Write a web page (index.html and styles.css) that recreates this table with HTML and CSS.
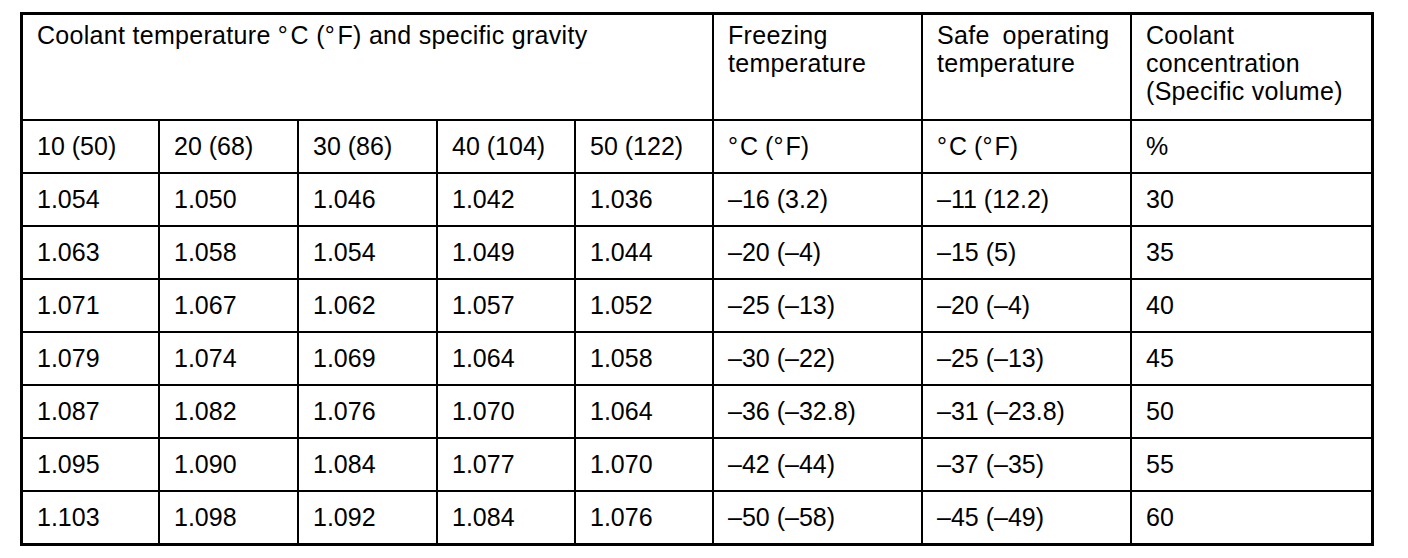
FILE: index.html
```html
<!DOCTYPE html>
<html lang="en">
<head>
<meta charset="utf-8">
<title>Coolant specific gravity</title>
<link rel="stylesheet" href="styles.css">
</head>
<body>
<div class="sheet">
  <div class="chart" role="table">
    <div class="cell head span5">Coolant temperature °&#8202;C (°&#8202;F) and specific gravity</div>
    <div class="cell head">Freezing<br>temperature</div>
    <div class="cell head">Safe&ensp;operating<br>temperature</div>
    <div class="cell head">Coolant<br>concentration<br>(Specific volume)</div>

    <div class="cell">10 (50)</div>
    <div class="cell">20 (68)</div>
    <div class="cell">30 (86)</div>
    <div class="cell">40 (104)</div>
    <div class="cell">50 (122)</div>
    <div class="cell">°&#8202;C (°&#8202;F)</div>
    <div class="cell">°&#8202;C (°&#8202;F)</div>
    <div class="cell">%</div>

    <div class="cell">1.054</div><div class="cell">1.050</div><div class="cell">1.046</div><div class="cell">1.042</div><div class="cell">1.036</div><div class="cell">–16 (3.2)</div><div class="cell">–11 (12.2)</div><div class="cell">30</div>
    <div class="cell">1.063</div><div class="cell">1.058</div><div class="cell">1.054</div><div class="cell">1.049</div><div class="cell">1.044</div><div class="cell">–20 (–4)</div><div class="cell">–15 (5)</div><div class="cell">35</div>
    <div class="cell">1.071</div><div class="cell">1.067</div><div class="cell">1.062</div><div class="cell">1.057</div><div class="cell">1.052</div><div class="cell">–25 (–13)</div><div class="cell">–20 (–4)</div><div class="cell">40</div>
    <div class="cell">1.079</div><div class="cell">1.074</div><div class="cell">1.069</div><div class="cell">1.064</div><div class="cell">1.058</div><div class="cell">–30 (–22)</div><div class="cell">–25 (–13)</div><div class="cell">45</div>
    <div class="cell">1.087</div><div class="cell">1.082</div><div class="cell">1.076</div><div class="cell">1.070</div><div class="cell">1.064</div><div class="cell">–36 (–32.8)</div><div class="cell">–31 (–23.8)</div><div class="cell">50</div>
    <div class="cell">1.095</div><div class="cell">1.090</div><div class="cell">1.084</div><div class="cell">1.077</div><div class="cell">1.070</div><div class="cell">–42 (–44)</div><div class="cell">–37 (–35)</div><div class="cell">55</div>
    <div class="cell">1.103</div><div class="cell">1.098</div><div class="cell">1.092</div><div class="cell">1.084</div><div class="cell">1.076</div><div class="cell">–50 (–58)</div><div class="cell">–45 (–49)</div><div class="cell">60</div>
  </div>
</div>
</body>
</html>
```

FILE: styles.css
```css
html, body {
  margin: 0;
  padding: 0;
  background: #ffffff;
}

body {
  font-family: "Liberation Sans", Arial, Helvetica, sans-serif;
  color: #000000;
}

.sheet {
  padding: 12px 0 0 20px;
}

.chart {
  display: grid;
  grid-template-columns: 135px 137px 137px 136px 136px 207px 207px 239px;
  grid-template-rows: 104px repeat(8, 51px);
  gap: 2px;
  padding: 3px;
  width: max-content;
  background: #000000;
}

.cell {
  background: #ffffff;
  display: flex;
  align-items: center;
  padding-left: 14px;
  font-size: 25px;
  white-space: nowrap;
}

.head {
  display: block;
  padding-top: 6px;
  font-size: 25px;
  line-height: 28px;
  letter-spacing: 0.3px;
}

.span5 {
  grid-column: span 5;
}
```
